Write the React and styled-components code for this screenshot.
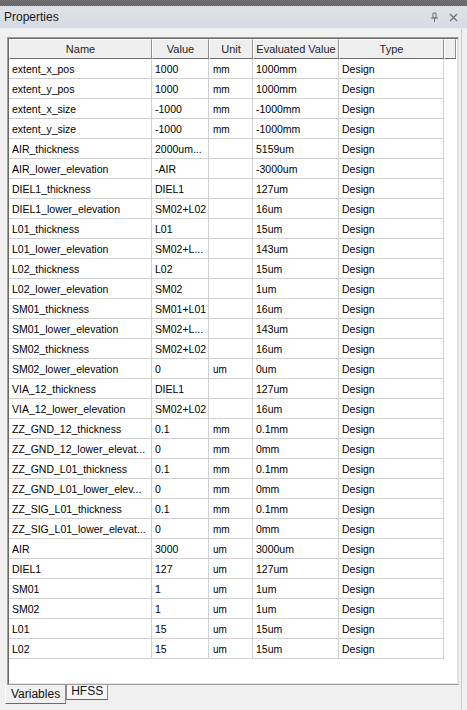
import React from 'react'
import styled, {createGlobalStyle} from 'styled-components'

const GlobalStyle = createGlobalStyle`
  html, body {
    margin: 0;
    padding: 0;
    background: #f0f0f0;
  }
  body {
    width: 467px;
    height: 710px;
    overflow: hidden;
    font-family: "Liberation Sans", Arial, sans-serif;
  }
`

const rows = [
  ['extent_x_pos', '1000', 'mm', '1000mm', 'Design'],
  ['extent_y_pos', '1000', 'mm', '1000mm', 'Design'],
  ['extent_x_size', '-1000', 'mm', '-1000mm', 'Design'],
  ['extent_y_size', '-1000', 'mm', '-1000mm', 'Design'],
  ['AIR_thickness', '2000um...', '', '5159um', 'Design'],
  ['AIR_lower_elevation', '-AIR', '', '-3000um', 'Design'],
  ['DIEL1_thickness', 'DIEL1', '', '127um', 'Design'],
  ['DIEL1_lower_elevation', 'SM02+L02', '', '16um', 'Design'],
  ['L01_thickness', 'L01', '', '15um', 'Design'],
  ['L01_lower_elevation', 'SM02+L...', '', '143um', 'Design'],
  ['L02_thickness', 'L02', '', '15um', 'Design'],
  ['L02_lower_elevation', 'SM02', '', '1um', 'Design'],
  ['SM01_thickness', 'SM01+L01', '', '16um', 'Design'],
  ['SM01_lower_elevation', 'SM02+L...', '', '143um', 'Design'],
  ['SM02_thickness', 'SM02+L02', '', '16um', 'Design'],
  ['SM02_lower_elevation', '0', 'um', '0um', 'Design'],
  ['VIA_12_thickness', 'DIEL1', '', '127um', 'Design'],
  ['VIA_12_lower_elevation', 'SM02+L02', '', '16um', 'Design'],
  ['ZZ_GND_12_thickness', '0.1', 'mm', '0.1mm', 'Design'],
  ['ZZ_GND_12_lower_elevat...', '0', 'mm', '0mm', 'Design'],
  ['ZZ_GND_L01_thickness', '0.1', 'mm', '0.1mm', 'Design'],
  ['ZZ_GND_L01_lower_elev...', '0', 'mm', '0mm', 'Design'],
  ['ZZ_SIG_L01_thickness', '0.1', 'mm', '0.1mm', 'Design'],
  ['ZZ_SIG_L01_lower_elevat...', '0', 'mm', '0mm', 'Design'],
  ['AIR', '3000', 'um', '3000um', 'Design'],
  ['DIEL1', '127', 'um', '127um', 'Design'],
  ['SM01', '1', 'um', '1um', 'Design'],
  ['SM02', '1', 'um', '1um', 'Design'],
  ['L01', '15', 'um', '15um', 'Design'],
  ['L02', '15', 'um', '15um', 'Design'],
]

const cols = '143px 57px 44px 86px 105px 12px'

const Panel = styled.div`
  display: flex;
  flex-direction: column;
  width: 467px;
  height: 710px;
  background: #f0f0f0;
`

const Hatch = styled.div`
  height: 6px;
  background-color: #7a7a7a;
  background-image:
    linear-gradient(45deg, #5c5c5c 25%, transparent 25%, transparent 75%, #5c5c5c 75%),
    linear-gradient(45deg, #5c5c5c 25%, transparent 25%, transparent 75%, #5c5c5c 75%);
  background-size: 2px 2px;
  background-position: 0 0, 1px 1px;
`

const TitleBar = styled.div`
  height: 22px;
  display: flex;
  align-items: center;
  padding: 0 9px 0 4px;
  background: linear-gradient(#dfe2e8, #d6dae2);
  border-bottom: 1px solid #e9ebef;
`

const Title = styled.div`
  flex: 1;
  font-size: 12px;
  color: #1a1a1a;
`

const TitleIcon = styled.svg`
  margin-left: 10px;
`

const Body = styled.div`
  flex: 1;
  display: flex;
  flex-direction: column;
  padding: 8px 0 0 7px;
  border-right: 1px solid #c9c9c9;
  margin-right: 5px;
`

const GridBox = styled.div`
  width: 449px;
  height: 645px;
  border: 1px solid #a0a0a0;
  border-right-color: #e3e3e3;
  border-bottom-color: #a0a0a0;
  box-shadow: inset 1px 1px 0 #696969, inset -1px -1px 0 #e3e3e3;
  padding: 1px 0 0 1px;
  background: #ffffff;
`

const HeaderRow = styled.div`
  display: grid;
  grid-template-columns: ${cols};
  height: 20px;
`

const HeaderCell = styled.div`
  display: flex;
  align-items: center;
  justify-content: center;
  font-size: 11px;
  color: #1e1e1e;
  background: #efefef;
  border-top: 1px solid #ffffff;
  border-left: 1px solid #ffffff;
  border-right: 1px solid #8f8f8f;
  border-bottom: 1px solid #6e6e6e;
  box-sizing: border-box;
`

const Row = styled.div`
  display: grid;
  grid-template-columns: ${cols};
  height: 20px;
`

const Cell = styled.div`
  display: flex;
  align-items: center;
  padding-left: ${p => (p.$unit ? '4px' : '3px')};
  font-size: ${p => (p.$unit ? '10px' : '10.5px')};
  padding-top: ${p => (p.$unit ? '2px' : '0')};
  color: #000;
  white-space: nowrap;
  overflow: hidden;
  border-right: 1px solid #d0d0d0;
  border-bottom: 1px solid #d0d0d0;
  box-sizing: border-box;
`

const Filler = styled.div``

const Tabs = styled.div`
  display: flex;
  align-items: flex-start;
  margin-left: -2px;
`

const Tab = styled.div`
  font-size: 12px;
  color: #111;
  box-sizing: border-box;
  ${p => p.$active ? `
    height: 19px;
    padding: 2px 5px 0 5px;
    background: #f0f0f0;
    border-bottom: 1px solid #6a6a6a;
    border-right: 1px solid #8a8a8a;
    border-left: 1px solid #ffffff;
  ` : `
    height: 15px;
    padding: 0 4px;
    line-height: 13px;
    background: #f7f7f7;
    border: 1px solid #8a8a8a;
    border-top: none;
    border-bottom: 1px solid #6a6a6a;
  `}
`

export default function App() {
  return (
    <Panel>
      <GlobalStyle />
      <Hatch />
      <TitleBar>
        <Title>Properties</Title>
        <TitleIcon width="9" height="10" viewBox="0 0 9 10">
          <path d="M3 1h3v5H3zM1 6h7M4.5 6v4" fill="none" stroke="#707070" strokeWidth="1" />
        </TitleIcon>
        <TitleIcon width="9" height="9" viewBox="0 0 9 9">
          <path d="M1 1l7 7M8 1L1 8" stroke="#707070" strokeWidth="1.3" />
        </TitleIcon>
      </TitleBar>
      <Body>
        <GridBox>
          <HeaderRow>
            <HeaderCell>Name</HeaderCell>
            <HeaderCell>Value</HeaderCell>
            <HeaderCell>Unit</HeaderCell>
            <HeaderCell>Evaluated Value</HeaderCell>
            <HeaderCell>Type</HeaderCell>
            <HeaderCell />
          </HeaderRow>
          {rows.map(r => (
            <Row key={r[0]}>
              <Cell>{r[0]}</Cell>
              <Cell>{r[1]}</Cell>
              <Cell $unit>{r[2]}</Cell>
              <Cell>{r[3]}</Cell>
              <Cell>{r[4]}</Cell>
              <Filler />
            </Row>
          ))}
        </GridBox>
        <Tabs>
          <Tab $active>Variables</Tab>
          <Tab>HFSS</Tab>
        </Tabs>
      </Body>
    </Panel>
  )
}
